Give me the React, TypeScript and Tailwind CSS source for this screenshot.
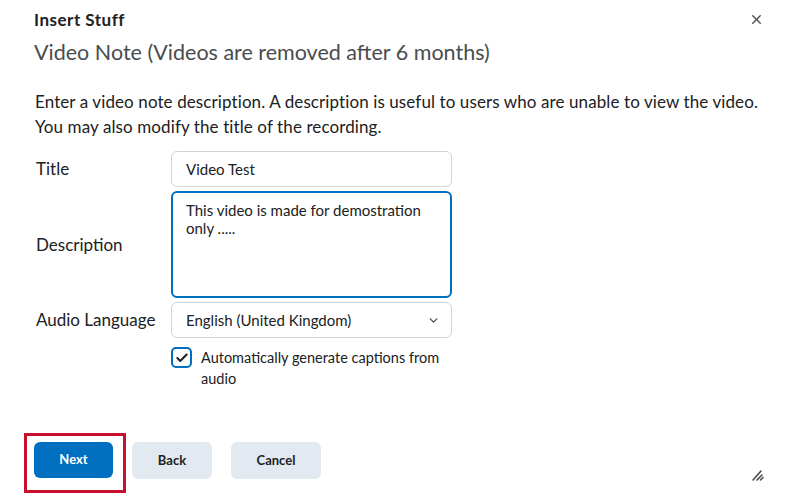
import { Check, ChevronDown, X } from 'lucide-react';

export default function App() {
    return (
        <div className="w-[800px] h-[502px] bg-white relative overflow-hidden text-[#202122]" style={{ fontFamily: 'Lato, "Noto Sans", sans-serif' }}>
            {/* Header */}
            <div className="pl-[34px] pr-[36px] pt-[10px] flex items-start justify-between">
                <div>
                    <h1 className="text-[17px] leading-[20px] font-bold tracking-[0.5px]">Insert Stuff</h1>
                    <h2 className="mt-[10px] text-[21.5px] leading-[24px] text-[#494c4e]">Video Note (Videos are removed after 6 months)</h2>
                </div>
                <button className="mt-[2px] text-[#494c4e]">
                    <X className="w-[15px] h-[15px]" strokeWidth={2.2} />
                </button>
            </div>

            {/* Intro */}
            <p className="pl-[35px] pr-[20px] mt-[25px] text-[17px] leading-[25px] tracking-[0.1px] text-[#202122]">
                Enter a video note description. A description is useful to users who are unable to view the video.
                <br />
                You may also modify the title of the recording.
            </p>

            {/* Form */}
            <div className="pl-[36px] mt-[12px] flex flex-col gap-[4px]">
                <div className="flex items-center">
                    <label className="w-[135px] text-[17px] text-[#202122]">Title</label>
                    <div className="w-[281px] h-[36px] border border-[#cdd5dc] rounded-[6px] flex items-center px-[14px] text-[15px] text-[#202122]">
                        Video Test
                    </div>
                </div>
                <div className="flex items-center">
                    <label className="w-[135px] text-[17px] text-[#202122]">Description</label>
                    <div className="w-[281px] h-[107px] border-2 border-[#006fbf] rounded-[6px] px-[13px] pt-[8px] text-[15px] leading-[18px] text-[#202122]">
                        This video is made for demostration
                        <br />
                        only .....
                    </div>
                </div>
                <div className="flex items-center">
                    <label className="w-[135px] text-[17px] text-[#202122]">Audio Language</label>
                    <div className="w-[281px] h-[36px] border border-[#cdd5dc] rounded-[6px] flex items-center justify-between pl-[14px] pr-[11px] text-[15px] text-[#202122]">
                        <span>English (United Kingdom)</span>
                        <ChevronDown className="w-[13px] h-[13px] text-[#494c4e]" strokeWidth={2.5} />
                    </div>
                </div>
                <div className="flex items-start pl-[135px] mt-[5px]">
                    <div className="w-[21px] h-[21px] shrink-0 border-2 border-[#006fbf] rounded-[5px] flex items-center justify-center">
                        <Check className="w-[14px] h-[14px] text-[#202122]" strokeWidth={3.5} />
                    </div>
                    <span className="ml-[9px] w-[255px] text-[14.5px] leading-[21px] text-[#202122]">
                        Automatically generate captions from audio
                    </span>
                </div>
            </div>

            {/* Footer buttons */}
            <div className="absolute left-[34px] top-[442px] flex gap-[19px]">
                <div className="relative">
                    <button className="w-[79px] h-[36px] rounded-[6px] bg-[#006fbf] text-white text-[13px] font-bold">Next</button>
                    <span className="absolute left-[-10px] top-[-9px] w-[102px] h-[60px] border-[3px] border-[#c8102e] pointer-events-none" />
                </div>
                <button className="w-[80px] h-[37px] rounded-[6px] bg-[#e3e9f1] text-[#202122] text-[13px] font-bold">Back</button>
                <button className="w-[90px] h-[37px] rounded-[6px] bg-[#e3e9f1] text-[#202122] text-[13px] font-bold">Cancel</button>
            </div>

            {/* Resize grip */}
            <svg className="absolute left-[751px] top-[468px]" width="13" height="13" viewBox="0 0 13 13">
                <path d="M2 12 L10 3 M6 12 L11 7 M9.5 12 L12 9.5" stroke="#494c4e" strokeWidth="1.6" strokeLinecap="round" />
            </svg>
        </div>
    );
}
